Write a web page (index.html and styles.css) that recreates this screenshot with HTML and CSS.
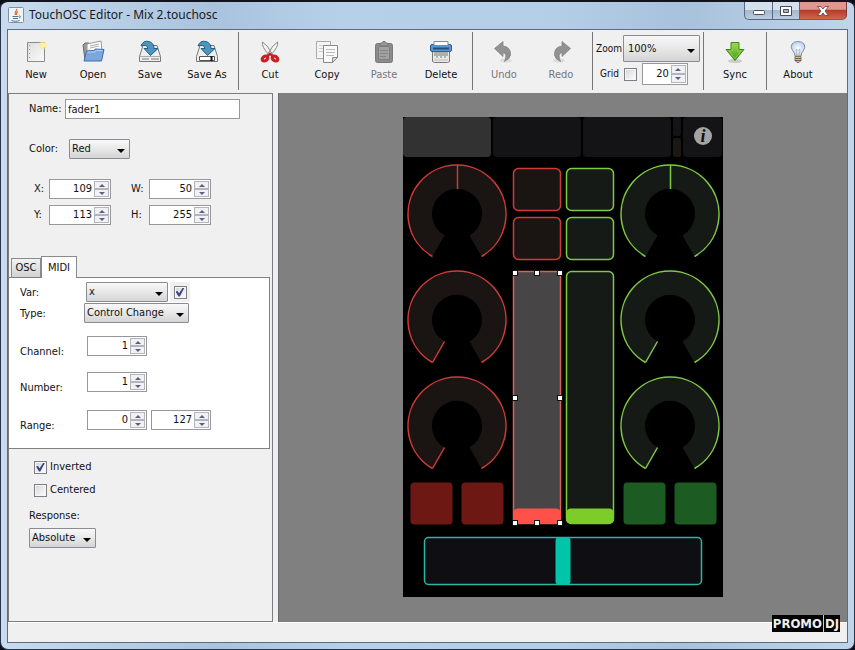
FILE: index.html
```html
<!DOCTYPE html>
<html lang="en">
<head>
<meta charset="utf-8">
<title>TouchOSC Editor - Mix 2.touchosc</title>
<link rel="stylesheet" href="styles.css">
</head>
<body>
<div class="window">
  <header class="titlebar">
    <svg class="app-icon" width="16" height="16" viewBox="0 0 16 16" aria-hidden="true">
      <rect x=".5" y=".5" width="15" height="15" rx="1" fill="#f1f4f7" stroke="#7d92aa"/>
      <path d="M8.500 2C9.500 4 5.500 5 7.500 8M10 4.500C7.500 6 8.500 6.500 8.500 8" fill="none" stroke="#e2672b" stroke-width="1.200"/>
      <path d="M4.500 9.500h6M5 11.500h5M3.500 13.500c2 1 6 1 8 0M11 9c2-.500 2 1.500 0 2" fill="none" stroke="#4d7396"/>
    </svg>
    <h1 class="title">TouchOSC Editor - Mix 2.touchosc</h1>
    <div class="window-buttons">
      <button class="win-btn" aria-label="Minimize"><svg width="14" height="12" viewBox="0 0 14 12"><rect x="1.500" y="5.500" width="11" height="4" rx="1" fill="#fff" stroke="#454c5c"/></svg></button>
      <button class="win-btn" aria-label="Maximize"><svg width="14" height="12" viewBox="0 0 14 12"><path d="M1.500 1.500h11v9h-11z" fill="#fff" stroke="#454c5c"/><path d="M4.500 4.500h5v3h-5z" fill="#a9b6c8" stroke="#454c5c"/></svg></button>
      <button class="win-btn close" aria-label="Close"><svg width="14" height="12" viewBox="0 0 14 12"><path d="M1.500 1.500h3.500l2 2.500 2-2.500h3.500l-3.500 4.500 3.500 4.500h-3.500l-2-2.500-2 2.500h-3.500l3.500-4.500z" fill="#fff" stroke="#6b3a3c" stroke-width=".8"/></svg></button>
    </div>
  </header>

  <main class="client">
    <nav class="toolbar" aria-label="Tools">
      <button class="tool">
        <svg width="24" height="24" viewBox="0 0 24 24"><defs><linearGradient id="paper" x2="1" y2="1"><stop stop-color="#dedede"/><stop offset="1" stop-color="#fbfbfb"/></linearGradient></defs><path d="M3.500 2.500h17v19h-17z" fill="url(#paper)" stroke="#8b8b8b"/><path d="M5.500 5v14" stroke="#999" stroke-dasharray="1 3"/><circle cx="19" cy="5" r="4" fill="#fbe98a" opacity=".6"/><circle cx="19" cy="5" r="2.500" fill="#fff29b"/></svg>
        <span>New</span>
      </button>
      <button class="tool">
        <svg width="24" height="24" viewBox="0 0 24 24"><path d="M2 5l2-2h4l2 2v15H4z" fill="#9c9c9c" stroke="#666"/><path d="M6 4l14-3 1 10H6z" fill="#fff" stroke="#999"/><path d="M9 6l9-2M9 8l9-2" stroke="#aaa"/><path d="M5.500 11l7-.500 2-1.500 8.500.500-2.500 11.500H3z" fill="#7ba7de" stroke="#3c6eab"/><path d="M6.500 12h7l2-1.500h6" stroke="#bcd5f3" fill="none"/></svg>
        <span>Open</span>
      </button>
      <button class="tool">
        <svg width="24" height="24" viewBox="0 0 24 24"><path d="M5 5.500h14l3.500 11v5h-21v-5z" fill="#eee" stroke="#777"/><path d="M2 16.500h20" stroke="#aaa"/><path d="M4 19h7M14 18v2M16 18v2M18 18v2M20 18v2" stroke="#777"/><path d="M3 6Q5 0 11 1.500q5 1.500 5 7h4l-7.500 7-6.500-7h4Q9 4 3 6z" fill="#4f94bd" stroke="#245f86"/></svg>
        <span>Save</span>
      </button>
      <button class="tool">
        <svg width="24" height="24" viewBox="0 0 24 24"><path d="M5 5.500h14l3.500 11v5h-21v-5z" fill="#eee" stroke="#777"/><path d="M4.500 16.500h15v4h-15z" fill="#fff" stroke="#555"/><path d="M16.500 16v5" stroke="#111" stroke-width="2"/><path d="M3 6Q5 0 11 1.500q5 1.500 5 7h4l-7.500 7-6.500-7h4Q9 4 3 6z" fill="#4f94bd" stroke="#245f86"/></svg>
        <span>Save As</span>
      </button>
      <i class="sep"></i>
      <button class="tool">
        <svg width="24" height="24" viewBox="0 0 24 24"><path d="M4.500 2q-1.500 4 6.500 13l2.500-2Q9.500 5 4.500 2zM19.500 2q1.500 4-6.500 13l-2.500-2Q14.500 5 19.500 2z" fill="#f3f3f3" stroke="#888"/><ellipse cx="7" cy="18.500" rx="3" ry="2.200" transform="rotate(-35 7 18.500)" fill="#f6dede" stroke="#c81f25" stroke-width="3.200"/><ellipse cx="17" cy="18.500" rx="3" ry="2.200" transform="rotate(35 17 18.500)" fill="#f6dede" stroke="#c81f25" stroke-width="3.200"/><path d="M9 16l3-2 3 2" fill="none" stroke="#c81f25" stroke-width="2.500"/></svg>
        <span>Cut</span>
      </button>
      <button class="tool">
        <svg width="24" height="24" viewBox="0 0 24 24"><path d="M1.500 1.500h14v17h-14z" fill="#f4f4f4" stroke="#aaa"/><path d="M4 5.500h7M4 8.500h4M4 11.500h4" stroke="#ccc"/><path d="M8.500 5.500h14v12l-5 5h-9z" fill="#fafafa" stroke="#888"/><path d="M17.500 22.500v-5h5z" fill="#ddd" stroke="#888"/><path d="M11 9.500h9M11 12.500h9M11 15.500h8" stroke="#bbb"/></svg>
        <span>Copy</span>
      </button>
      <button class="tool" disabled>
        <svg width="24" height="24" viewBox="0 0 24 24"><rect x="3.500" y="3.500" width="17" height="19" rx="2" fill="#8b8b8b" stroke="#7a7a7a"/><path d="M6.500 6.500h11v13h-11z" fill="#a2a2a2" stroke="#7f7f7f"/><path d="M8 10.500h8M8 13.500h8M8 16.500h6" stroke="#858585"/><path d="M8 6V3.500l2-.500 1-1.500h2l1 1.500 2 .500V6z" fill="#999" stroke="#777"/></svg>
        <span>Paste</span>
      </button>
      <button class="tool">
        <svg width="24" height="24" viewBox="0 0 24 24"><path d="M3.500 11.500h17v10l-2 1h-13l-2-1z" fill="#e9e9e9" stroke="#777"/><path d="M6 11v5M8 11v7M10 11v5M12 11v7M14 11v5M16 11v7M18 11v5" stroke="#777"/><path d="M5 20h14" stroke="#bbb"/><rect x="1.500" y="4.500" width="21" height="7" rx="1.500" fill="#5c93d1" stroke="#2d5d9a"/><path d="M5 1.500h14v4H5z" fill="#fff" stroke="#888"/><path d="M4 8.500h16" stroke="#284d7c" stroke-width="2"/></svg>
        <span>Delete</span>
      </button>
      <i class="sep"></i>
      <button class="tool" disabled>
        <svg width="24" height="24" viewBox="0 0 24 24"><ellipse cx="14" cy="20.500" rx="6" ry="2" fill="#ddd"/><path d="M2.500 8.500L11 1.500V6q8 1 7.500 9-.500 4-6 6.500 3.500-8-1.500-9v4z" fill="#929292" stroke="#858585" stroke-width=".8"/></svg>
        <span>Undo</span>
      </button>
      <button class="tool" disabled>
        <svg width="24" height="24" viewBox="0 0 24 24"><ellipse cx="10" cy="20.500" rx="6" ry="2" fill="#ddd"/><path d="M21.500 8.500L13 1.500V6q-8 1-7.500 9 .500 4 6 6.500-3.500-8 1.500-9v4z" fill="#929292" stroke="#858585" stroke-width=".8"/></svg>
        <span>Redo</span>
      </button>
      <i class="sep"></i>
      <div class="view-group">
        <div class="view-row zoom-row">
          <label for="zoom">Zoom</label>
          <span class="select zoom"><select id="zoom"><option>100%</option></select></span>
        </div>
        <div class="view-row grid-row">
          <label for="grid">Grid</label>
          <input class="check" type="checkbox" id="grid">
          <span class="spinner grid-size"><input type="number" value="20" aria-label="Grid size"><span class="arrows"><button aria-label="Increase"></button><button aria-label="Decrease"></button></span></span>
        </div>
      </div>
      <i class="sep"></i>
      <button class="tool">
        <svg width="24" height="24" viewBox="0 0 24 24"><defs><linearGradient id="leaf" x2="0" y2="1"><stop stop-color="#a5dc5c"/><stop offset="1" stop-color="#45980d"/></linearGradient></defs><ellipse cx="12" cy="21" rx="7" ry="2" fill="#ccc"/><path d="M8 2.500h8v7h5l-9 11-9-11h5z" fill="url(#leaf)" stroke="#3f8b16"/><path d="M9.500 4h5v7h3.500l-6 7.500L6 11h3.500z" fill="none" stroke="#8bcf4c"/></svg>
        <span>Sync</span>
      </button>
      <i class="sep"></i>
      <button class="tool">
        <svg width="24" height="24" viewBox="0 0 24 24"><defs><radialGradient id="glass"><stop stop-color="#fff"/><stop offset="1" stop-color="#b9d3ef"/></radialGradient></defs><path d="M9 16q0-3-2.500-5.500Q4 7 6 4q2-2.500 6-2.500T18 4q2 3-.500 6.500Q15 13 15 16z" fill="url(#glass)" stroke="#8291a5"/><path d="M11 16l-1-7 2 1.500 2-1.500-1 7" fill="none" stroke="#a9b2bf" stroke-width=".8"/><path d="M9 16.500h6v4l-2 2h-2l-2-2z" fill="#dfc168" stroke="#88764a"/><path d="M9 18.500h6M9 20.500h6" stroke="#6a6458"/></svg>
        <span>About</span>
      </button>
    </nav>

    <div class="workspace">
      <aside class="panel">
        <div class="field name-row"><label for="name">Name:</label><input class="text" id="name" type="text" value="fader1"></div>
        <div class="field color-row"><label for="color">Color:</label><span class="select color"><select id="color"><option>Red</option></select></span></div>
        <div class="geometry">
          <label for="gx">X:</label><span class="spinner"><input type="number" id="gx" value="109"><span class="arrows"><button aria-label="Increase"></button><button aria-label="Decrease"></button></span></span>
          <label for="gw">W:</label><span class="spinner"><input type="number" id="gw" value="50"><span class="arrows"><button aria-label="Increase"></button><button aria-label="Decrease"></button></span></span>
          <label for="gy">Y:</label><span class="spinner"><input type="number" id="gy" value="113"><span class="arrows"><button aria-label="Increase"></button><button aria-label="Decrease"></button></span></span>
          <label for="gh">H:</label><span class="spinner"><input type="number" id="gh" value="255"><span class="arrows"><button aria-label="Increase"></button><button aria-label="Decrease"></button></span></span>
        </div>

        <div class="tabs" role="tablist">
          <button class="tab" role="tab" aria-selected="false">OSC</button>
          <button class="tab active" role="tab" aria-selected="true">MIDI</button>
        </div>
        <section class="midi" role="tabpanel">
          <div class="midi-row var-row"><label for="var">Var:</label><span class="select var"><select id="var"><option>x</option></select></span><span class="check-well"><input class="check" type="checkbox" checked aria-label="Send variable"></span></div>
          <div class="midi-row type-row"><label for="type">Type:</label><span class="select type"><select id="type"><option>Control Change</option></select></span></div>
          <div class="midi-row value-row"><label for="channel">Channel:</label><span class="spinner"><input type="number" id="channel" value="1"><span class="arrows"><button aria-label="Increase"></button><button aria-label="Decrease"></button></span></span></div>
          <div class="midi-row value-row"><label for="number">Number:</label><span class="spinner"><input type="number" id="number" value="1"><span class="arrows"><button aria-label="Increase"></button><button aria-label="Decrease"></button></span></span></div>
          <div class="midi-row value-row"><label for="from">Range:</label><span class="spinner"><input type="number" id="from" value="0"><span class="arrows"><button aria-label="Increase"></button><button aria-label="Decrease"></button></span></span><span class="spinner"><input type="number" value="127" aria-label="Range end"><span class="arrows"><button aria-label="Increase"></button><button aria-label="Decrease"></button></span></span></div>
        </section>

        <div class="options">
          <label class="option"><input class="check" type="checkbox" checked>Inverted</label>
          <label class="option"><input class="check" type="checkbox">Centered</label>
        </div>
        <div class="response">
          <label for="response">Response:</label>
          <span class="select absolute"><select id="response"><option>Absolute</option></select></span>
        </div>
      </aside>

      <section class="canvas" aria-label="Layout canvas">
        <svg class="device" width="320" height="480" viewBox="0 0 320 480">
          <defs>
            <g id="ring">
              <path class="ring-fill" d="M-24.500 42.500A49 49 0 1 1 24.500 42.500L12.500 21.500A25 25 0 1 0-12.500 21.500z"/>
              <path class="ring-line" d="M-24.500 42.500A49 49 0 1 1 24.500 42.500"/>
            </g>
          </defs>
          <rect width="320" height="480"/>
          <rect y="0" width="88" height="40" rx="4" fill="#323232"/>
          <g fill="#141416">
            <rect x="90" width="88" height="40" rx="4"/>
            <rect x="180" width="88" height="40" rx="4"/>
            <rect x="270" width="8" height="19" rx="2"/>
            <rect x="270" y="21" width="8" height="19" rx="2" fill="#1c1614"/>
            <rect x="280" width="39" height="40" rx="4"/>
          </g>
          <circle cx="300" cy="19" r="9" fill="#a4a4a4"/>
          <text class="info" x="300" y="25">i</text>

          <g class="red">
            <use href="#ring" x="54" y="97"/><path class="ring-line" d="M54.500 48v24"/>
            <use href="#ring" x="54" y="203"/><path class="ring-line" d="M29.500 245.500l12-21"/>
            <use href="#ring" x="54" y="309"/><path class="ring-line" d="M29.500 351.500l12-21"/>
            <rect class="pad" x="110.500" y="51.500" width="47" height="42" rx="5"/>
            <rect class="pad" x="110.500" y="100.500" width="47" height="42" rx="5"/>
          </g>
          <g class="green">
            <use href="#ring" x="267" y="97"/><path class="ring-line" d="M267.500 48v24"/>
            <use href="#ring" x="267" y="203"/><path class="ring-line" d="M242.500 245.500l12-21"/>
            <use href="#ring" x="267" y="309"/><path class="ring-line" d="M242.500 351.500l12-21"/>
            <rect class="pad" x="163.500" y="51.500" width="47" height="42" rx="5"/>
            <rect class="pad" x="163.500" y="100.500" width="47" height="42" rx="5"/>
            <rect class="pad" x="163.500" y="154.500" width="47" height="252" rx="5"/>
          </g>
          <rect x="163" y="391.500" width="48" height="15.500" rx="5" fill="#7ccd28"/>

          <rect x="110.500" y="154.500" width="47" height="252" rx="2" fill="#484546" stroke="#dc605c" stroke-width="1.500"/>
          <rect x="110" y="391.500" width="48" height="15.500" rx="5" fill="#ff5149"/>
          <g class="handles">
            <rect x="109.500" y="153.500" width="5" height="5"/><rect x="131.500" y="153.500" width="5" height="5"/><rect x="154.500" y="153.500" width="5" height="5"/>
            <rect x="109.500" y="278.500" width="5" height="5"/><rect x="154.500" y="278.500" width="5" height="5"/>
            <rect x="109.500" y="403.500" width="5" height="5"/><rect x="131.500" y="403.500" width="5" height="5"/><rect x="154.500" y="403.500" width="5" height="5"/>
          </g>

          <g fill="#6e1814"><rect x="7.500" y="365.500" width="42" height="42" rx="4"/><rect x="58.500" y="365.500" width="42" height="42" rx="4"/></g>
          <g fill="#1c5c22"><rect x="220.500" y="365.500" width="42" height="42" rx="4"/><rect x="271.500" y="365.500" width="42" height="42" rx="4"/></g>
          <rect x="21.500" y="420.500" width="277" height="47" rx="4" fill="#0f0f13" stroke="#2bb5a2" stroke-width="1.500"/>
          <rect x="152.500" y="420" width="15" height="48" rx="4" fill="#00c5a9"/>
        </svg>
      </section>
    </div>
    <footer class="status"></footer>
  </main>
</div>
<div class="watermark"><span>PROMO</span><span>DJ</span></div>
</body>
</html>
```
FILE: styles.css
```css
* { box-sizing: border-box; }

body {
  margin: 0;
  background: #0b0d18;
  color: #111;
  font: 11px/14px Tahoma, "DejaVu Sans Condensed", "Noto Sans", sans-serif;
}

button, input, select { font: inherit; color: inherit; margin: 0; padding: 0; }

/* Window frame */
.window {
  display: flex;
  flex-direction: column;
  height: 100vh;
  min-height: 600px;
  padding: 0 7px 7px;
  border: 1px solid #26364a;
  border-top: 2px solid #10141f;
  border-radius: 8px;
  background: linear-gradient(90deg, #c9dbee 0, #a9c3de 25%, #b7d0ea 40%, #b5cee8 65%, #a8c1dc 80%, #c0d5ea 100%);
}

.titlebar {
  display: flex;
  align-items: flex-start;
  height: 28px;
  flex: none;
}

.app-icon { margin: 5px 5px 0 0; }

.title {
  flex: 1;
  margin: 5px 0 0;
  font: 12px/16px "Segoe UI", "Noto Sans", sans-serif;
  color: #151a22;
}

.window-buttons { display: flex; }

.win-btn {
  display: flex;
  align-items: center;
  justify-content: center;
  width: 27px;
  height: 18px;
  border: 1px solid #566881;
  border-top: 0;
  border-right: 0;
  background: linear-gradient(#d5e0ed 0 45%, #a6b8cd 50%, #bccde0);
}

.win-btn:first-child { width: 28px; border-bottom-left-radius: 5px; }

.win-btn.close {
  width: 48px;
  border-right: 1px solid #7b3a3a;
  border-bottom-right-radius: 5px;
  background: linear-gradient(#dc9a8c 0 42%, #b83b2a 50%, #d2654c);
}

.client {
  display: flex;
  flex-direction: column;
  flex: 1;
  min-height: 0;
  outline: 1px solid #5b6b80;
  background: #f0f0f1;
}

/* Toolbar */
.toolbar { display: flex; height: 63px; flex: none; }

.tool {
  display: flex;
  flex-direction: column;
  align-items: center;
  gap: 4px;
  width: 57px;
  padding: 10px 1px 0 0;
  border: 0;
  background: none;
  white-space: nowrap;
}

.tool:disabled { color: #777; }

.sep {
  width: 1px;
  margin: 2px 3px 3px 2px;
  background: #777;
}

.view-group { width: 105px; padding: 5px 1px 0 0; }
.view-row { display: flex; align-items: center; }
.view-row label { font-size: 10px; }
.zoom-row { justify-content: space-between; }
.grid-row { margin-top: 1px; padding-left: 4px; gap: 5px; }

/* Controls */
.select { position: relative; display: block; }

.select select {
  appearance: none;
  display: block;
  width: 100%;
  height: 20px;
  padding: 0 2px;
  border: 1px solid #8b8b92;
  border-radius: 1px;
  background: linear-gradient(#f8f8f8, #e8e8e8 50%, #d4d4d6);
}

.select::after {
  content: "";
  position: absolute;
  right: 5px;
  top: 50%;
  border: 4px solid transparent;
  border-top-color: #000;
  border-bottom: 0;
}

.zoom { width: 77px; }
.zoom select { height: 27px; padding-left: 4px; }
.color { width: 61px; }
.var { width: 82px; }
.type { width: 105px; margin-left: -2px; }
.absolute { width: 67px; }

.text {
  width: 175px;
  height: 20px;
  padding: 0 2px;
  border: 1px solid #98989c;
  background: #fff;
}

.spinner {
  display: flex;
  width: 62px;
  height: 20px;
  padding: 1px;
  border: 1px solid #98989c;
  background: #fff;
}

.spinner input {
  appearance: textfield;
  flex: 1;
  min-width: 0;
  padding-right: 2px;
  border: 0;
  background: none;
  text-align: right;
}

.spinner input::-webkit-inner-spin-button { appearance: none; margin: 0; }

.arrows { display: flex; flex-direction: column; width: 15px; }

.arrows button {
  display: flex;
  flex: 1;
  align-items: center;
  justify-content: center;
  border: 1px solid #b4b4bc;
  background: #f1f1f4;
}

.arrows button::after {
  content: "";
  border: 3px solid transparent;
  border-top: 0;
  border-bottom-color: #5a5f86;
}

.arrows button:last-child::after {
  border-top: 3px solid #5a5f86;
  border-bottom: 0;
}

.grid-size { width: 46px; height: 22px; }

.check {
  appearance: none;
  display: flex;
  align-items: center;
  justify-content: center;
  width: 13px;
  height: 13px;
  border: 1px solid #7e7e88;
  background: linear-gradient(135deg, #d4d4d8, #fff);
  box-shadow: inset 0 0 0 1px #f6f6f6;
}

.check:checked::before {
  content: "";
  width: 9px;
  height: 9px;
  background: #34477e;
  clip-path: polygon(0 45%, 22% 40%, 40% 65%, 82% 0, 100% 0, 48% 100%, 34% 100%);
}

/* Property panel */
.workspace { display: flex; flex: 1; min-height: 0; }

.panel {
  width: 265px;
  flex: none;
  padding-top: 5px;
  border: 1px solid #7c7c80;
}

.field { display: flex; align-items: center; padding-left: 20px; }
.name-row label { width: 36px; }
.color-row { margin-top: 20px; }
.color-row label { width: 40px; }

.geometry {
  display: grid;
  grid-template-columns: 15px 82px 18px 62px;
  row-gap: 6px;
  align-items: center;
  margin-top: 20px;
  padding-left: 25px;
}

.tabs {
  display: flex;
  align-items: flex-end;
  height: 21px;
  margin-top: 31px;
  padding-left: 2px;
}

.tab {
  height: 19px;
  width: 30px;
  border: 1px solid #8a8a8e;
  border-bottom: 0;
  background: linear-gradient(#f2f2f2, #d2d2d4);
}

.tab.active {
  position: relative;
  z-index: 1;
  width: 36px;
  height: 22px;
  margin-bottom: -1px;
  background: #fff;
}

.midi {
  height: 172px;
  margin-right: 2px;
  padding: 4px 0 0 11px;
  border: 1px solid #808084;
  border-left: 0;
  background: #fff;
}

.midi-row { display: flex; align-items: flex-start; }
.midi-row label { width: 66px; padding-top: 4px; }
.type-row { margin-top: 1px; }
.value-row { gap: 4px; margin-top: 13px; }
.midi-row.value-row label { width: 63px; padding-top: 9px; }
.value-row .spinner { width: 60px; }
.value-row:last-child { margin-top: 15px; }

.check-well {
  display: flex;
  align-items: center;
  justify-content: center;
  width: 20px;
  height: 20px;
  margin-left: 2px;
  background: #f0f0f1;
}

.options { display: grid; gap: 9px; padding: 11px 0 0 25px; }
.option { display: flex; align-items: center; gap: 3px; }

.response { padding: 12px 0 0 20px; }
.response label { display: block; margin-bottom: 5px; }

/* Layout canvas */
.canvas {
  display: flex;
  flex: 1;
  align-items: center;
  justify-content: center;
  margin-left: 5px;
  padding-bottom: 1px;
  border-left: 1px solid #6c6c6e;
  background: #808080;
}

.device { display: block; }
.red { --line: #d13b37; --fill: #1a1413; }
.green { --line: #80c943; --fill: #151a16; }
.ring-fill { fill: var(--fill); }
.ring-line { fill: none; stroke: var(--line); stroke-width: 1.500; }
.pad { fill: var(--fill); stroke: var(--line); stroke-width: 1.500; }
.handles rect { fill: #fff; stroke: #111; }

.info {
  fill: #111;
  font: italic bold 18px "Liberation Serif", serif;
  text-anchor: middle;
}

.status { height: 20px; flex: none; border-top: 1px solid #fff; }

.watermark {
  position: absolute;
  right: 15px;
  bottom: 18px;
  display: flex;
  gap: 1px;
  background: #ccc;
  color: #eee;
  font: bold 13px/17px "Liberation Sans Narrow", "DejaVu Sans Condensed", sans-serif;
}

.watermark span { padding: 0 1px; background: #000; }
```
